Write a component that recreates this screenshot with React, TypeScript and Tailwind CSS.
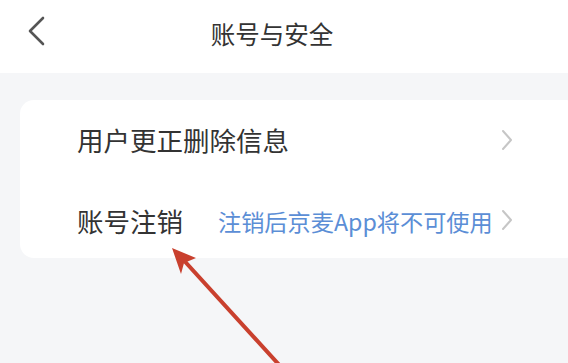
const font = { fontFamily: '"Noto Sans CJK SC", "Noto Sans", sans-serif' }

function Chevron() {
  return (
    <svg className="shrink-0" width="14" height="22" viewBox="0 0 14 22" fill="none">
      <path d="M3 2 L11 11 L3 20" stroke="#c6c6c6" strokeWidth="2" strokeLinecap="round" strokeLinejoin="round" />
    </svg>
  )
}

export default function App() {
  return (
    <div className="relative w-[568px] h-[363px] overflow-hidden bg-[#f5f6f8]" style={font}>
      {/* Header */}
      <div className="relative flex h-[73px] items-center justify-center bg-white">
        <svg className="absolute left-[26px] top-[15px]" width="22" height="32" viewBox="0 0 22 32" fill="none">
          <path d="M17 3 L4 16 L17 29" stroke="#555" strokeWidth="2.6" strokeLinecap="round" strokeLinejoin="round" />
        </svg>
        <h1 className="-ml-[24px] -mt-[4px] text-[24.5px] text-[#333]">账号与安全</h1>
      </div>

      {/* Card */}
      <div className="ml-[20px] mt-[27px] w-[560px] rounded-[14px] bg-white">
        <div className="flex h-[80px] items-center justify-between pl-[57px] pr-[66px]">
          <span className="text-[26.5px] text-[#333]">用户更正删除信息</span>
          <Chevron />
        </div>
        <div className="flex h-[78px] items-center pl-[57px] pr-[66px]">
          <span className="mt-[4px] text-[26.5px] text-[#333]">账号注销</span>
          <span className="ml-[35px] mt-[4px] text-[23.2px] text-[#5b8ed6]">注销后京麦App将不可使用</span>
          <div className="ml-auto mt-[2px] flex">
            <Chevron />
          </div>
        </div>
      </div>

      {/* Annotation arrow */}
      <svg className="absolute left-0 top-0" width="568" height="363" viewBox="0 0 568 363">
        <line x1="282" y1="368" x2="178" y2="254" stroke="#c9402e" strokeWidth="4" strokeLinecap="round" />
        <path d="M172 248 L196 258 L184 263 L181 274 Z" fill="#c9402e" />
      </svg>
    </div>
  )
}
